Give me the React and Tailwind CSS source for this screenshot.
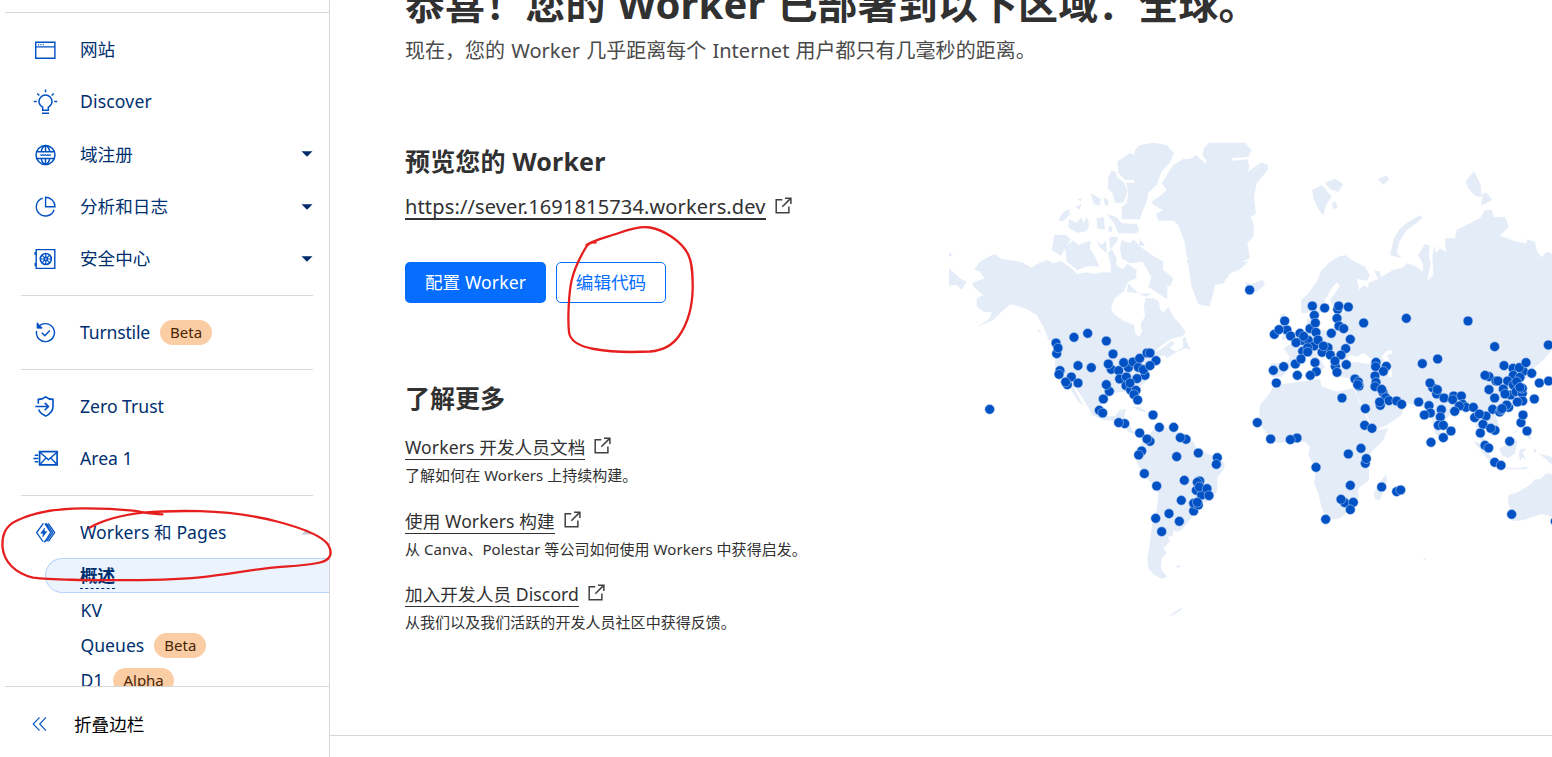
import React from 'react';

const iconProps = {
  viewBox: '0 0 24 24',
  fill: 'none',
  stroke: '#0051c3',
  strokeWidth: 1.4,
  className: 'h-6 w-6 shrink-0',
};

const icons = {
  window: (
    <svg {...iconProps}>
      <path d="M2.700 4.300h19.200v16H2.700zM2.700 8.900h19.200" />
      <path d="M5 6.600h1M7.400 6.600h1M9.800 6.600h1" />
    </svg>
  ),
  bulb: (
    <svg {...iconProps} className="h-6 w-6 shrink-0 overflow-visible" strokeWidth="1.500">
      <path d="M9.700 20.200v-3C7.400 15.900 6 14.200 6 11.600a6.500 6.500 0 0 1 13 0c0 2.600-1.400 4.300-3.700 5.600v3zM9 23.300h7M12.500-.5v2.800M.8 11.500h3M21.200 11.500h3M4.300 3.500l2 2M20.700 3.500l-2 2" />
    </svg>
  ),
  globe: (
    <svg {...iconProps} strokeWidth="1.500">
      <circle cx="12.500" cy="12" r="9.500" />
      <path d="M4 8.800h17M4 15.400h17M12.500 2.500v6M12.500 15.400v6M8.200 8.600c.5-3 2.300-5.500 4.300-6.100 2 .6 3.800 3.100 4.300 6.100M8.200 15.400c.5 3 2.300 5.500 4.300 6.100 2-.6 3.800-3.100 4.300-6.100" />
      <path strokeWidth="1" d="m7.500 11.400.8 1.500.9-1.500.9 1.500.8-1.500.8 1.500.9-1.500.9 1.500.8-1.500.8 1.500.9-1.500.8 1.500.8-1.500" />
    </svg>
  ),
  pie: (
    <svg {...iconProps}>
      <path d="M9.800 3.200a9.100 9.100 0 1 0 11.300 11.500" />
      <path d="M12.600 2.300v9.400H22a9.400 9.400 0 0 0-9.400-9.400z" />
    </svg>
  ),
  safe: (
    <svg {...iconProps}>
      <path d="M3.200 2.600h18.600v18.800H3.200zM2.200 5v3M2.200 16v3" />
      <circle cx="12.800" cy="12" r="5.500" strokeWidth="1.600" />
      <circle cx="12.800" cy="12" r="1.600" strokeWidth="1.600" />
      <path strokeWidth="1.200" d="M12.800 6.500v4M12.800 13.500v4M7.300 12h4M14.300 12h4M8.900 8.100l2.800 2.800M13.900 13.100l2.800 2.800M16.700 8.100l-2.800 2.800M11.700 13.100l-2.800 2.800" />
    </svg>
  ),
  turnstile: (
    <svg {...iconProps}>
      <path d="M5 6.500a9 9 0 1 1-1.400 3.300M4.400 1.700v5h4.700M8.800 11.800l3 3 5-5.400" />
      <path fill="#0051c3" d="M4.600 3v3.500h3.500z" />
    </svg>
  ),
  shield: (
    <svg {...iconProps} strokeWidth="1.600">
      <path d="M5.300 8.800V4.400c2.900 0 5.200-.9 7.400-2.600 2 1.700 4.400 2.600 7.300 2.600v7c0 4.300-3 7.500-7.300 9.700-3.300-1.500-6-3.800-7-6.600M2.300 11.500h13M11.700 7.900l3.700 3.600-3.700 3.700" />
    </svg>
  ),
  mail: (
    <svg {...iconProps} className="h-6 w-6 shrink-0 overflow-visible">
      <path strokeWidth="1.700" d="M6.600 4.700h17.500v13.200H6.600z" />
      <path d="m7 5.200 8.400 7.500L24 5.200M7 17.500l6-6.600M23.800 17.500l-6-6.600M1.700 8.200h3.500M.3 11.500h5M1.700 14.800h3.500" />
    </svg>
  ),
  workers: (
    <svg {...iconProps}>
      <path d="M10.300 3.300 3.700 12.500l6.200 9M11.800 3.300l5.900 9.200-5.700 9h-1.400M15.200 3.300l6.400 9.200-6.200 9M13.300 3.300l6.300 9.200-6 9" strokeWidth="1.300" />
      <path fill="#0051c3" strokeWidth=".5" d="M11.600 8 7.700 13.200h2.500l-.5 3.800 4.200-5.500h-2.600z" />
    </svg>
  ),
};

function Badge({ children }) {
  return (
    <span className="ml-[10px] flex h-[25px] items-center rounded-full bg-[#fbcda5] px-[10px] text-[15px] leading-none text-[#4a2504]">
      {children}
    </span>
  );
}

function NavItem({ icon, label, badge, caret, className = 'h-[52.3px]', textClass = '' }) {
  return (
    <li className={`flex items-center pr-[16.5px] pl-[33px] ${className}`}>
      {icons[icon]}
      <span className={`ml-[23px] pb-[2px] ${textClass}`}>{label}</span>
      {badge && <Badge>{badge}</Badge>}
      {caret && (
        <svg viewBox="0 0 12 6" className="mb-[1px] ml-auto h-[6px] w-[12px]">
          <path d={caret === 'up' ? 'M.5 5.500 6 0l5.500 5.500z' : 'M.5.300h11L6 5.700z'} fill={caret === 'up' ? '#c3cad8' : '#002b6b'} />
        </svg>
      )}
    </li>
  );
}

function SubItem({ label, badge }) {
  return (
    <li className="flex h-[35px] items-center pl-[80.5px]">
      <span className="pb-[2px]">{label}</span>
      {badge && <Badge>{badge}</Badge>}
    </li>
  );
}

const Divider = () => <hr className="my-[10px] mr-[16px] ml-[21px] border-[#d9d9d9]" />;

function Sidebar() {
  return (
    <aside className="flex h-full w-[330px] shrink-0 flex-col border-r border-[#d5d7d8] text-[17.6px] leading-[24px] text-[#003070]">
      <nav className="mt-[12px] ml-[5px] h-[674px] shrink-0 overflow-hidden border-t border-[#d5d7d8]">
        <div className="-ml-[5px] pt-[11px]">
          <ul>
            <NavItem icon="window" label="网站" />
            <NavItem icon="bulb" label="Discover" textClass="tracking-[0.15px]" />
            <NavItem icon="globe" label="域注册" caret="down" />
            <NavItem icon="pie" label="分析和日志" caret="down" />
            <NavItem icon="safe" label="安全中心" caret="down" />
          </ul>
          <Divider />
          <ul>
            <NavItem icon="turnstile" label="Turnstile" badge="Beta" className="h-[53px]" textClass="tracking-[-0.18px]" />
          </ul>
          <Divider />
          <ul>
            <NavItem icon="shield" label="Zero Trust" className="h-[53px]" />
            <NavItem icon="mail" label="Area 1" className="h-[52px]" />
          </ul>
          <Divider />
          <ul>
            <NavItem icon="workers" label="Workers 和 Pages" caret="up" className="h-[52px]" textClass="-mb-[2px] tracking-[0.07px]" />
          </ul>
          <ul>
            <li className="ml-[45px] flex h-[35px] items-center rounded-l-full border border-r-0 border-[#b6d3fb] bg-[#ebf3fe] pl-[34px] font-bold">
              <span className="h-[26px] border-b border-dashed border-[#003681]">概述</span>
            </li>
            <SubItem label="KV" />
            <SubItem label="Queues" badge="Beta" />
            <SubItem label="D1" badge="Alpha" />
          </ul>
        </div>
      </nav>
      <div className="ml-[5px] flex h-[71px] items-center border-t border-[#d5d7d8] pt-[4px] pl-[27px] text-black">
        <svg viewBox="0 0 16 16" className="h-4 w-4" fill="none" stroke="#0051c3" strokeWidth="1.100">
          <path d="M7.500 1.300 1.200 8l6.300 6.700M14 1.300 7.700 8l6.300 6.700" />
        </svg>
        <span className="ml-[26px] pb-[1px]">折叠边栏</span>
      </div>
    </aside>
  );
}

function ExternalIcon() {
  return (
    <svg viewBox="0 0 17 17" className="h-[17px] w-[17px]" fill="none" stroke="#404040" strokeWidth="1.500">
      <path d="M7.300 2.700H1.200v13h12.700V9.500M10 1.200h5.900v5.900M15.700 1.400 7.300 9.800" />
    </svg>
  );
}

const resources = [
  { title: 'Workers 开发人员文档', text: '了解如何在 Workers 上持续构建。' },
  { title: '使用 Workers 构建', text: '从 Canva、Polestar 等公司如何使用 Workers 中获得启发。' },
  { title: '加入开发人员 Discord', text: '从我们以及我们活跃的开发人员社区中获得反馈。' },
];

const westLand = [
  'M150 378 165 373 185 387 220 392 245 397 275 413 290 403 322 390 340 400 362 393 385 408 400 420 410 432 440 427 465 432 485 427 512 428 513 405 503 370 515 358 530 385 528 405 548 418 562 402 590 420 588 445 565 455 550 485 525 505 513 530 520 550 550 572 582 585 585 610 597 620 606 605 602 580 615 560 612 525 617 505 640 505 657 515 660 538 670 550 685 530 700 560 720 582 737 605 730 618 700 625 680 635 655 655 645 668 672 650 695 633 704 640 690 655 710 665 730 650 728 625 737 620 740 635 753 660 735 655 700 672 680 685 675 675 650 682 635 715 620 750 605 765 585 778 590 795 601 815 592 820 575 790 550 785 525 788 505 800 490 810 480 835 500 858 525 858 540 840 558 837 552 865 565 878 578 902 600 912 620 922 610 935 590 915 565 905 550 885 520 872 490 870 455 855 450 840 425 800 405 770 400 772 430 828 415 815 390 775 375 770 350 740 345 700 350 660 340 635 325 628 310 590 290 555 265 540 235 528 210 523 180 550 160 570 112 591 150 565 155 547 130 545 110 528 110 505 130 495 100 470 97 458 120 450 133 445 120 425 103 418 120 395z',
  'M620 920 640 900 660 890 700 900 720 910 760 935 770 955 800 970 830 982 855 1000 850 1020 832 1042 832 1080 815 1110 785 1120 765 1150 745 1175 730 1195 715 1205 700 1203 697 1218 683 1220 690 1235 670 1255 680 1270 665 1285 662 1310 668 1325 682 1340 665 1347 640 1332 625 1315 622 1285 628 1250 637 1180 650 1140 655 1090 640 1065 610 1035 590 995 585 975 600 945z',
  'M665 160 700 105 730 87 750 87 768 75 797 102 800 93 787 75 792 55 808 38 915 38 935 60 925 80 875 85 878 92 922 88 928 110 924 125 965 97 983 105 983 120 950 160 942 200 948 250 932 262 942 285 940 320 922 340 930 385 905 395 925 395 900 418 870 430 850 460 825 465 820 490 808 530 775 522 755 470 745 405 760 395 740 380 735 340 715 285 700 272 655 272 648 252 670 240 640 225 635 215 665 195 680 180z',
  'M532 95 570 68 582 75 585 60 600 45 640 38 680 45 702 70 690 97 665 125 650 165 625 188 620 215 605 250 600 268 545 268 545 232 560 220 565 185 558 158 583 158 583 150 555 150 535 130z',
  'M515 122 528 125 530 140 550 155 563 185 550 218 525 218 518 190 503 175 505 140z',
  'M343 315 378 315 392 328 362 378 336 360z',
  'M375 350 400 332 415 345 440 335 452 332 450 355 465 380 478 410 445 408 412 420 380 395z',
  'M354 272 370 245 390 237 388 256 370 273zM387 268 410 278 425 262 430 280 440 260 448 285 440 303 412 308 385 292z',
  'M452 190 482 207 480 227 462 222zM490 202 505 210 505 225 495 227zM407 230 423 222 420 240zM413 208 425 205 423 215zM470 265 492 262 495 300 472 295z',
  'M500 252 530 262 545 280 590 282 598 300 590 310 535 310 522 280zM505 290 518 288 515 305 505 305z',
  'M508 322 533 320 533 333 510 360zM470 330 485 345 498 330 500 370 478 350z',
  'M545 330 570 340 580 328 597 345 600 327 615 347 597 347 635 375 670 395 668 418 700 445 690 470 682 465 682 508 655 490 625 470 635 440 622 420 608 395 570 400 545 385 540 352z',
  'M565 460 595 490 560 485zM595 492 630 490 622 500zM27 415 60 445 80 455 65 480 50 465 27 467zM27 368 40 374 27 381zM745 382 760 395 750 405 740 395zM295 595 305 610 295 605zM705 1308 724 1306 715 1314zM688 1460 700 1448 725 1433 727 1437 705 1453z',
  'M575 830 600 832 625 850 600 842zM620 850 650 850 640 860z',
];

const eastLand = [
  'M185 550 183 510 205 490 230 455 245 420 270 395 300 378 318 376 335 390 375 410 390 435 380 452 350 447 358 480 372 465 385 475 385 458 415 448 403 423 420 424 422 442 460 420 490 412 500 400 530 410 547 425 550 405 535 375 555 342 570 347 567 380 572 400 566 430 562 453 580 435 577 380 583 345 587 370 600 355 618 365 615 325 645 325 650 300 690 280 720 265 735 240 755 240 762 260 795 262 806 290 780 317 830 335 858 340 862 328 885 335 892 365 905 382 920 365 936 370 936 660 905 695 880 715 872 740 860 745 840 765 855 790 850 815 820 825 790 845 765 850 775 880 778 905 755 920 745 895 725 885 715 910 740 935 750 960 735 950 712 915 705 870 690 840 650 830 625 860 605 885 600 930 585 910 570 850 545 830 520 825 490 815 445 810 428 795 440 820 465 825 490 830 485 855 440 885 402 902 380 855 350 795 345 775 350 750 300 740 285 715 270 690 245 665 225 665 255 710 240 725 215 690 200 675 170 690 150 715 125 740 95 740 92 700 140 700 150 680 130 655 165 635 185 610 205 600 200 570 215 560 222 600 260 600 285 590 285 555 330 540 285 540 270 510 300 468 290 457 275 475 255 510 250 530 235 560 225 575 215 545 200 548z',
  'M105 765 150 760 210 750 240 748 245 770 290 785 340 775 360 820 385 875 400 902 445 895 430 930 395 965 375 1000 387 1020 387 1050 355 1075 355 1105 330 1140 300 1165 265 1170 245 1135 235 1090 222 1060 228 1020 205 975 210 950 195 935 150 935 110 940 85 915 65 890 58 860 60 825 85 795 100 770z',
  'M437 1033 442 1050 420 1110 405 1108 402 1090 415 1065zM936 1032 920 1030 900 1048 885 1048 870 1065 830 1088 805 1095 805 1120 815 1150 818 1174 850 1170 905 1152 936 1160z',
  'M778 955 800 945 820 920 832 935 825 970 805 985 785 975zM700 932 720 940 745 970 765 1000 750 995 725 965zM780 1010 830 1015 865 1010 860 1018 810 1018zM840 958 860 955 848 968 858 990 846 980 842 992 836 975zM880 955 890 960 884 970zM895 970 936 982 936 1005 915 985zM862 910 872 912 874 930 864 925zM820 910 838 890 828 907z',
  'M217 180 245 165 258 180 275 200 258 225 250 257 237 240 220 205zM255 158 285 146 310 162 295 185 270 178zM275 222 285 214 294 232 280 238zM413 147 440 137 448 148 428 164z',
  'M450 375 462 325 478 298 505 275 540 256 548 263 530 280 500 300 478 335 470 368 485 384 460 378zM677 155 702 123 722 165 725 202 705 198 685 175zM728 190 740 188 757 210 723 228z',
  'M17 455 35 462 68 450 75 465 50 485 20 485zM120 555 134 550 138 600 152 620 125 632 132 600zM95 600 115 590 115 618 95 622zM547 1286 557 1284 556 1291z',
];

const westDots = [
  [350, 671], [348, 639], [354, 654], [402, 622], [443, 610], [499, 633], [519, 672], [514, 718], [505, 702], [414, 707], [454, 713],
  [360, 722], [357, 733], [394, 741], [382, 764], [377, 756], [414, 759], [565, 713], [551, 698], [536, 722], [579, 696], [595, 712],
  [599, 685], [621, 669], [630, 669], [648, 692], [615, 736], [610, 719], [630, 707], [539, 747], [591, 746], [559, 741], [558, 767],
  [572, 780], [570, 759], [588, 781], [582, 794], [593, 810], [508, 784], [499, 764], [490, 807], [149, 838], [478, 841], [488, 849],
  [639, 855], [554, 881], [536, 878], [599, 909], [630, 934], [621, 927], [658, 892], [701, 892], [605, 963], [596, 975], [613, 1031],
  [650, 1068], [738, 928], [721, 923], [775, 969], [832, 983], [829, 1003], [710, 980], [733, 1051], [779, 1053], [772, 1057], [769, 1081],
  [785, 1095], [778, 1071], [801, 1076], [807, 1097], [724, 1111], [761, 1143], [761, 1120], [775, 1125], [772, 1117], [647, 1165],
  [687, 1151], [718, 1174], [665, 1205],
];

const eastDots = [
  [29, 480], [217, 528], [254, 534], [293, 538], [296, 528], [325, 531], [223, 556], [291, 565], [134, 573], [210, 596], [226, 579],
  [371, 579], [499, 565], [684, 573], [141, 600], [103, 613], [117, 599], [152, 618], [228, 607], [274, 610], [297, 588], [311, 596],
  [180, 610], [187, 631], [205, 631], [191, 619], [168, 638], [222, 648], [234, 630], [188, 664], [203, 653], [203, 666], [331, 628], [317, 656],
  [264, 653], [246, 667], [250, 648], [271, 675], [303, 675], [286, 709], [285, 693], [291, 727], [319, 704], [100, 721], [131, 710],
  [166, 702], [183, 687], [225, 698], [229, 725], [172, 736], [211, 736], [408, 697], [407, 710], [439, 709], [430, 724], [405, 738],
  [547, 701], [593, 687], [764, 650], [925, 645], [792, 707], [819, 715], [850, 724], [838, 713], [858, 698], [875, 730], [820, 736], [747, 740],
  [735, 736], [109, 759], [345, 747], [355, 756], [357, 768], [353, 764], [408, 757], [405, 770], [429, 787], [425, 778], [437, 803],
  [447, 812], [470, 813], [485, 823], [421, 826], [419, 816], [306, 804], [376, 836], [52, 878], [92, 927], [171, 924], [151, 929],
  [374, 886], [396, 895], [363, 955], [325, 972], [376, 1000], [379, 986], [228, 1012], [331, 1066], [425, 1071], [470, 1085], [482, 1080],
  [314, 1118], [303, 1108], [340, 1117], [331, 1139], [257, 1168], [578, 773], [570, 759], [590, 792], [592, 779], [612, 804], [641, 798],
  [664, 798], [638, 809], [536, 816], [567, 827], [571, 849], [553, 855], [604, 839], [601, 861], [668, 823], [678, 832], [658, 828],
  [644, 844], [704, 863], [700, 832], [595, 886], [610, 886], [633, 903], [610, 923], [573, 937], [738, 858], [718, 852], [758, 838],
  [729, 883], [765, 901], [752, 895], [721, 909], [735, 946], [746, 954], [764, 997], [783, 1006], [809, 934], [764, 804], [747, 779],
  [768, 753], [774, 753], [803, 753], [820, 765], [840, 742], [830, 755], [790, 777], [812, 795], [795, 792], [828, 785], [847, 790], [847, 775],
  [840, 772], [848, 813], [832, 816], [806, 832], [800, 825], [779, 846], [783, 840], [786, 836], [883, 807], [898, 759], [926, 753], [843, 878],
  [849, 855], [861, 903], [815, 1153], [946, 1174],
];

function Region({ land, dots, water, shift }) {
  return (
    <g transform={shift}>
      <g fill="#e4ecf8">{land.map((d) => <path key={d} d={d} />)}</g>
      {water && <path d={water} fill="#fff" />}
      <g fill="#0051c3" stroke="#b9d0f2" strokeWidth="1.600">
        {dots.map(([x, y], i) => <circle key={i} cx={x} cy={y} r="14.500" />)}
      </g>
    </g>
  );
}

function WorldMap() {
  return (
    <svg viewBox="0 0 1836 1500" className="h-[500px] w-[612px] shrink-0">
      <Region land={westLand} dots={westDots} water="M612 425 622 420 625 435 615 442z" />
      <Region
        land={eastLand}
        dots={eastDots}
        shift="translate(900 0)"
        water="M318 695 330 675 350 680 372 668 385 680 400 690 385 702 350 697zM425 680 440 662 458 660 456 672 440 675 452 700 458 740 445 740 438 705z"
      />
    </svg>
  );
}

function Annotations() {
  return (
    <svg
      viewBox="0 0 700 757"
      className="pointer-events-none absolute top-0 left-0 h-[757px] w-[700px]"
      fill="none"
      stroke="#e61e1e"
      strokeWidth="2.300"
      strokeLinecap="round"
      strokeLinejoin="round"
    >
      <path d="M595.500 242.500C591 242 588 243.500 585.500 248C579 259 574 270 571.500 281C569 292 567.500 318 569 332C570 342 583 347 594 349C610 352 630 352.500 650 351.500C662 350.500 672 346 679 336C690 320 693 302 692.700 284C692.500 271 692 262 688 254C681 241 664 230 650 227.500C641 226 630 229 619 233C606 237.500 594 240 586.500 245" />
      <path d="M90 527.500C105 519 123 515 143 512.700C162 511 180 510.700 200 511.200C228 512 252 515 277 521.500C300 527.500 322 536 328 544.500C333 553 331 560 320 562.500C307 566 286 566 266 568.300C244 571 222 575 200 577.300C160 581 120 580.500 83 580C63 579.500 47 579.500 33 577.700C15 573 4 562 2.500 547C2 535 5 526 17 520.500C34 512 60 508.500 83 508.300C100 508.200 117 509 133 510.700C143 512 150 514 162.500 514.300" />
    </svg>
  );
}

export default function App() {
  return (
    <div
      lang="zh-CN"
      className="relative flex h-[757px] w-[1552px] overflow-hidden bg-white font-['Noto_Sans','Noto_Sans_CJK_SC',sans-serif]"
    >
      <Sidebar />
      <main className="flex h-full min-w-0 flex-1 flex-col text-[#313131]">
        <div className="flex h-[736px] shrink-0 flex-col border-b border-[#d5d7d8] pl-[75px]">
          <h1 className="-mt-[21px] h-[50px] text-[40px] leading-[50px] font-bold tracking-[0.1px] whitespace-nowrap [word-spacing:1.500px]">
            恭喜！您的 Worker 已部署到以下区域：全球。
          </h1>
          <p className="mt-[7px] h-[30px] text-[20px] leading-[30px] tracking-[0.03px] whitespace-nowrap text-[#4a4a4a] [word-spacing:0.8px]">
            现在，您的 Worker 几乎距离每个 Internet 用户都只有几毫秒的距离。
          </p>
          <div className="mt-[64px] flex">
            <div className="w-[535px] shrink-0 pt-[13px]">
              <h2 className="text-[25px] leading-[36px] font-bold tracking-[0.18px]">预览您的 Worker</h2>
              <div className="mt-[14px] flex h-[28px] items-start">
                <a className="h-[27px] border-b-2 border-[#313131] text-[20px] leading-[27px] tracking-[0.14px]">https://sever.1691815734.workers.dev</a>
                <span className="ml-[9px] pt-[4px]"><ExternalIcon /></span>
              </div>
              <div className="mt-[41px] flex gap-[10px] text-[17.6px]">
                <button className="h-[41px] w-[141px] rounded-[5px] bg-[#056dff] tracking-[0.1px] text-white">配置 Worker</button>
                <button className="h-[41px] w-[110px] rounded-[5px] border border-[#056dff] text-[#056dff]">编辑代码</button>
              </div>
              <h2 className="mt-[77px] text-[25px] leading-[36px] font-bold">了解更多</h2>
              <ul className="mt-[19px]">
                {resources.map(({ title, text }) => (
                  <li key={title} className="h-[73.7px]">
                    <div className="flex h-[25px] items-start">
                      <a className="h-[25px] border-b border-[#313131] text-[17.6px] leading-[24px] tracking-[0.09px]">{title}</a>
                      <span className="ml-[9px] pt-[2px]"><ExternalIcon /></span>
                    </div>
                    <p className="mt-[5px] text-[15px] leading-[20px] tracking-[0.04px] whitespace-nowrap">{text}</p>
                  </li>
                ))}
              </ul>
            </div>
            <WorldMap />
          </div>
        </div>
      </main>
      <Annotations />
    </div>
  );
}
